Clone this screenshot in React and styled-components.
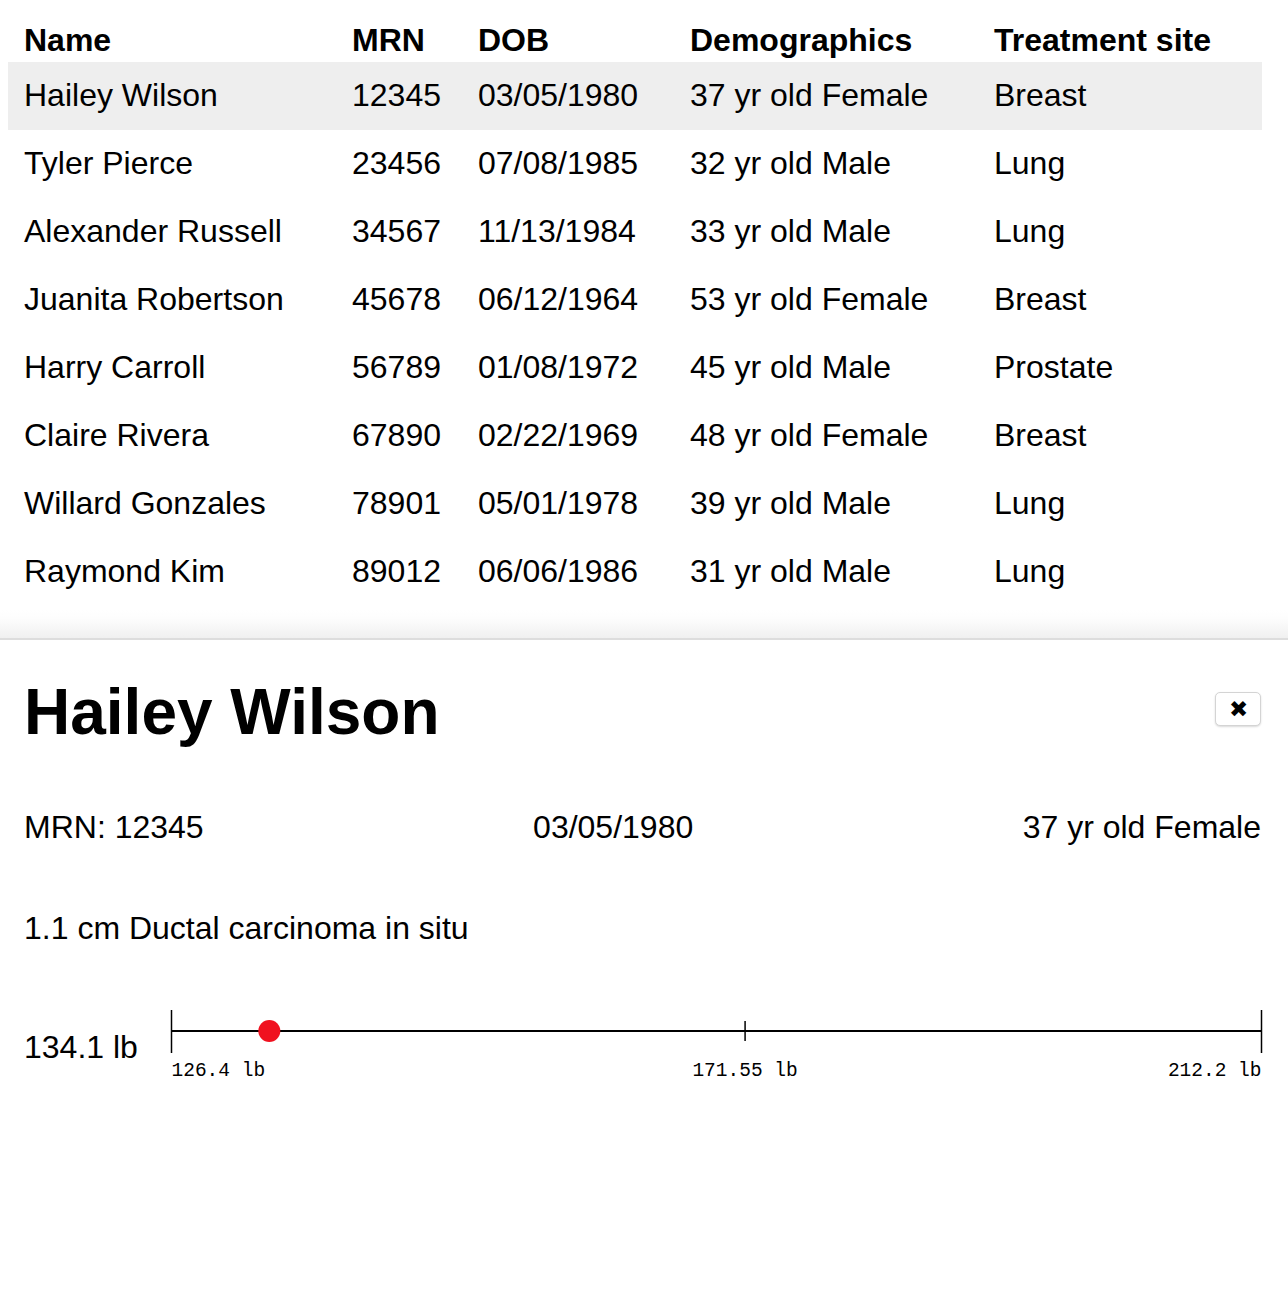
import React from "react";
import styled, { createGlobalStyle } from "styled-components";

const GlobalStyle = createGlobalStyle`
  body {
    margin: 0;
    background: #fff;
    color: #000;
    font-family: "Liberation Sans", Arial, Helvetica, sans-serif;
  }
`;

const patients = [
  { name: "Hailey Wilson", mrn: "12345", dob: "03/05/1980", demo: "37 yr old Female", site: "Breast" },
  { name: "Tyler Pierce", mrn: "23456", dob: "07/08/1985", demo: "32 yr old Male", site: "Lung" },
  { name: "Alexander Russell", mrn: "34567", dob: "11/13/1984", demo: "33 yr old Male", site: "Lung" },
  { name: "Juanita Robertson", mrn: "45678", dob: "06/12/1964", demo: "53 yr old Female", site: "Breast" },
  { name: "Harry Carroll", mrn: "56789", dob: "01/08/1972", demo: "45 yr old Male", site: "Prostate" },
  { name: "Claire Rivera", mrn: "67890", dob: "02/22/1969", demo: "48 yr old Female", site: "Breast" },
  { name: "Willard Gonzales", mrn: "78901", dob: "05/01/1978", demo: "39 yr old Male", site: "Lung" },
  { name: "Raymond Kim", mrn: "89012", dob: "06/06/1986", demo: "31 yr old Male", site: "Lung" },
];

const columns = [
  { key: "name", label: "Name", width: 328 },
  { key: "mrn", label: "MRN", width: 126 },
  { key: "dob", label: "DOB", width: 212 },
  { key: "demo", label: "Demographics", width: 304 },
  { key: "site", label: "Treatment site", width: 284 },
];

const Page = styled.div`
  padding: 8px 26px 0 8px;
`;

const Table = styled.table`
  border-collapse: collapse;
  table-layout: fixed;
  width: 1254px;
  font-size: 32px;
  line-height: 36px;
`;

const HeaderCell = styled.th`
  text-align: left;
  font-weight: bold;
  padding: 14px 16px 4px 16px;
  white-space: nowrap;
`;

const Row = styled.tr`
  background: ${(p) => (p.$selected ? "#eeeeee" : "transparent")};
`;

const Cell = styled.td`
  padding: 15px 16px 17px 16px;
  white-space: nowrap;
`;

const Divider = styled.div`
  margin-top: 4px;
  height: 28px;
  background: linear-gradient(to bottom, #ffffff 0%, #fdfdfd 30%, #f0f0f0 100%);
  border-bottom: 2px solid #dddddd;
`;

const DetailPanel = styled.section`
  padding: 36px 27px 0 24px;
  font-size: 32px;
  line-height: 36px;
`;

const TitleRow = styled.div`
  display: flex;
  justify-content: space-between;
  align-items: center;
`;

const Title = styled.h1`
  margin: 0;
  font-size: 64px;
  line-height: 72px;
  font-weight: bold;
`;

const CloseButton = styled.button`
  width: 46px;
  height: 34px;
  margin-bottom: 6px;
  padding: 0;
  background: #fff;
  border: 1px solid #d4d4d4;
  border-radius: 5px;
  box-shadow: 0 1px 2px rgba(0, 0, 0, 0.15);
  font-size: 23px;
  line-height: 1;
  color: #000;
  display: flex;
  align-items: center;
  justify-content: center;
  cursor: pointer;
`;

const InfoRow = styled.div`
  margin-top: 61px;
  display: flex;
  justify-content: space-between;
`;

const Diagnosis = styled.p`
  margin: 65px 0 0;
`;

const WeightRow = styled.div`
  margin-top: 64px;
  display: flex;
  align-items: center;
  gap: 35px;
`;

const WeightLabel = styled.span`
  white-space: nowrap;
  width: 112px;
`;

const Chart = styled.svg`
  flex: 1;
  display: block;
  overflow: visible;
`;

const AxisText = styled.text`
  font-family: "Liberation Mono", "Courier New", monospace;
  font-size: 19.5px;
  fill: #000;
`;

function WeightChart({ min, max, mean, value }) {
  const width = 1091;
  const left = 0.5;
  const right = width - 0.5;
  const x = (v) => left + ((v - min) / (max - min)) * (right - left);
  return (
    <Chart width={width} height={74} viewBox={`0 0 ${width} 74`}>
      <line x1={left} y1={21} x2={right} y2={21} stroke="#000" strokeWidth="2" />
      <line x1={left} y1={0} x2={left} y2={43} stroke="#000" strokeWidth="1.5" />
      <line x1={right} y1={0} x2={right} y2={43} stroke="#000" strokeWidth="1.5" />
      <line x1={x(mean)} y1={11} x2={x(mean)} y2={31} stroke="#000" strokeWidth="1.5" />
      <circle cx={x(value)} cy={21} r={11} fill="#f0111f" />
      <AxisText x={left} y={66} textAnchor="start">{`${min} lb`}</AxisText>
      <AxisText x={x(mean)} y={66} textAnchor="middle">{`${mean} lb`}</AxisText>
      <AxisText x={right} y={66} textAnchor="end">{`${max} lb`}</AxisText>
    </Chart>
  );
}

export default function App() {
  const selected = patients[0];
  return (
    <>
      <GlobalStyle />
      <Page>
        <Table>
          <colgroup>
            {columns.map((c) => (
              <col key={c.key} style={{ width: c.width }} />
            ))}
          </colgroup>
          <thead>
            <tr>
              {columns.map((c) => (
                <HeaderCell key={c.key}>{c.label}</HeaderCell>
              ))}
            </tr>
          </thead>
          <tbody>
            {patients.map((p) => (
              <Row key={p.mrn} $selected={p.mrn === selected.mrn}>
                {columns.map((c) => (
                  <Cell key={c.key}>{p[c.key]}</Cell>
                ))}
              </Row>
            ))}
          </tbody>
        </Table>
      </Page>
      <Divider />
      <DetailPanel>
        <TitleRow>
          <Title>{selected.name}</Title>
          <CloseButton aria-label="Close">✖</CloseButton>
        </TitleRow>
        <InfoRow>
          <span>MRN: {selected.mrn}</span>
          <span>{selected.dob}</span>
          <span>{selected.demo}</span>
        </InfoRow>
        <Diagnosis>1.1 cm Ductal carcinoma in situ</Diagnosis>
        <WeightRow>
          <WeightLabel>134.1 lb</WeightLabel>
          <WeightChart min={126.4} max={212.2} mean={171.55} value={134.1} />
        </WeightRow>
      </DetailPanel>
    </>
  );
}
